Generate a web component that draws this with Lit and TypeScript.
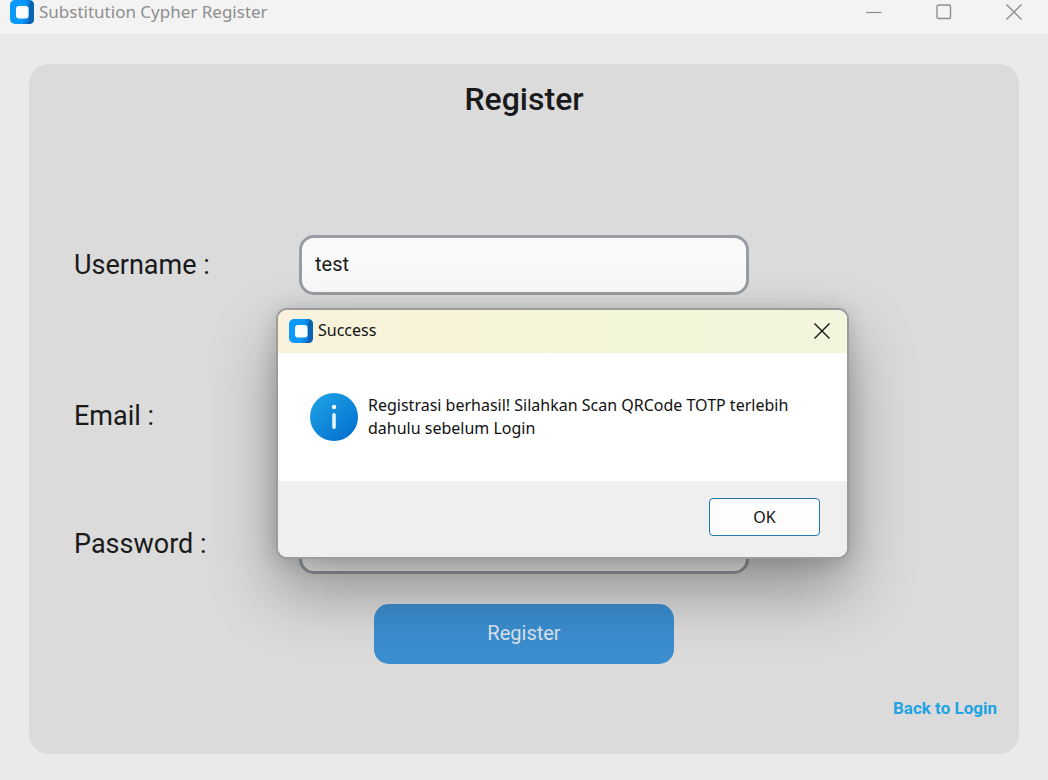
import { LitElement, html, css, svg } from "lit";
import { customElement, property } from "lit/decorators.js";

@customElement("app-logo")
class AppLogo extends LitElement {
  static styles = css`
    :host { display: block; width: 24px; height: 24px; flex: none; }
    .logo { display: block; }
  `;
  render() {
    return html`<svg class="logo" width="24" height="24" viewBox="0 0 24 24" aria-hidden="true">
      <rect width="24" height="24" rx="5" fill="#0a98fb" />
      <path d="M18 4.500 20.500 0.300Q24 1.500 24 5V19Q24 24 19 24H16L18.500 19.500 19 17V7Z" fill="#0a62b0" />
      <path d="M16 0H19L20.500 0.700 19 4.500 17 6ZM14 18 18 17.500 19.500 19.500 16.500 24H13Z" fill="#0a85e2" />
      <rect x="6" y="6" width="12.500" height="12.500" rx="3" fill="#fbfdff" />
    </svg>`;
  }
}

@customElement("window-glyph")
class WindowGlyph extends LitElement {
  @property() kind = "close";
  static styles = css`
    :host { display: block; }
    .glyph { display: block; fill: none; stroke: currentColor; }
  `;
  render() {
    const shapes: Record<string, unknown> = {
      minimize: svg`<path d="M0 8.500H15.500" stroke-width="1.200" />`,
      maximize: svg`<rect x="1" y="1" width="13.500" height="13.500" rx="1.500" stroke-width="1.400" />`,
      close: svg`<path d="M0.500 0.500 15.500 15.500M15.500 0.500 0.500 15.500" stroke-width="1.400" />`,
    };
    return html`<svg class="glyph" width="16" height="16" viewBox="0 0 16 16" aria-hidden="true">${shapes[this.kind]}</svg>`;
  }
}

@customElement("app-root")
class AppRoot extends LitElement {
  static styles = css`
    :host {
      display: flex;
      flex-direction: column;
      position: relative;
      min-height: 100vh;
      box-sizing: border-box;
      overflow: hidden;
      background: #eaeaea;
      color: #1a1a1a;
      font-family: Roboto, sans-serif;
    }
    button { font: inherit; color: inherit; border: 0; padding: 0; background: none; }
    .titlebar {
      display: flex;
      align-items: center;
      height: 34px;
      padding: 0 26px 11px 10px;
      box-sizing: border-box;
      gap: 5px;
      background: #f3f3f3;
      color: #8e8e8e;
      font: 17px/24px "Noto Sans", sans-serif;
    }
    .titlebar .caption { flex: 1; }
    .controls { display: flex; gap: 54px; }
    .page { flex: 1; display: flex; padding: 30px 29px 26px; }
    .card {
      flex: 1;
      display: flex;
      flex-direction: column;
      padding: 15px 22px 34px 45px;
      border-radius: 20px;
      background: #dbdbdb;
    }
    .heading { margin: 0 0 116px -23px; text-align: center; font-size: 32px; line-height: 40px; font-weight: 500; }
    .form { display: flex; flex-direction: column; }
    .row { display: grid; grid-template-columns: 225px minmax(0, 450px); align-items: center; margin-bottom: 68px; }
    .row.first { margin-bottom: 91px; }
    .row.last { margin-bottom: 30px; }
    .label { font-size: 27px; line-height: 32px; }
    .field {
      width: 100%;
      height: 60px;
      box-sizing: border-box;
      padding: 0 13px 2px;
      border: 3px solid #979da2;
      border-radius: 15px;
      background: #f9f9fa;
      color: #1a1a1a;
      font: 20px/24px Roboto, sans-serif;
      outline: none;
    }
    .submit {
      width: 300px;
      height: 60px;
      margin-left: -23px;
      padding-bottom: 2px;
      align-self: center;
      border-radius: 15px;
      background: #3b8ed0;
      color: #dce4ee;
      font-size: 20px;
    }
    .back {
      align-self: flex-end;
      margin-top: auto;
      color: #1fa3e4;
      font-size: 17px;
      line-height: 24px;
      font-weight: 700;
      text-decoration: none;
    }
    .dialog {
      position: absolute;
      left: 276px;
      top: 308px;
      width: 573px;
      margin: 0;
      padding: 0;
      box-sizing: border-box;
      border: 2px solid #9c9c9c;
      border-radius: 11px;
      overflow: hidden;
      background: #fff;
      color: #111;
      font: 16px/23px "Noto Sans", sans-serif;
      box-shadow: 0 32px 64px rgba(0, 0, 0, 0.34), 0 2px 21px rgba(0, 0, 0, 0.16);
    }
    .dialog-title {
      display: flex;
      align-items: center;
      gap: 5px;
      height: 43px;
      padding: 0 17px 2px 11px;
      box-sizing: border-box;
      background: linear-gradient(90deg, #f9f1dc, #f7f4d9 30%, #f4f6d9 60%, #f3f5dc);
    }
    .dialog-title .caption { flex: 1; }
    .message { display: flex; gap: 10px; padding: 40px 32px; }
    .info { flex: none; display: block; }
    .text { margin: 0; width: 440px; padding-top: 1px; }
    .actions { display: flex; justify-content: flex-end; padding: 17px 27px 21px; background: #efefef; }
    .ok {
      width: 111px;
      height: 38px;
      border: 1px solid #1f78b0;
      border-radius: 4px;
      background: #fdfdfd;
    }
  `;

  private row(id: string, label: string, value: string, type: string, extra = "") {
    return html`<div class="row ${extra}">
      <label class="label" for=${id}>${label}</label>
      <input class="field" id=${id} type=${type} .value=${value} />
    </div>`;
  }

  render() {
    return html`
      <header class="titlebar">
        <app-logo></app-logo>
        <span class="caption">Substitution Cypher Register</span>
        <div class="controls">
          <button aria-label="Minimize"><window-glyph kind="minimize"></window-glyph></button>
          <button aria-label="Maximize"><window-glyph kind="maximize"></window-glyph></button>
          <button aria-label="Close"><window-glyph kind="close"></window-glyph></button>
        </div>
      </header>
      <main class="page">
        <section class="card">
          <h1 class="heading">Register</h1>
          <form class="form">
            ${this.row("username", "Username :", "test", "text", "first")}
            ${this.row("email", "Email :", "", "email")}
            ${this.row("password", "Password :", "", "password", "last")}
            <button class="submit" type="button">Register</button>
          </form>
          <a class="back" href="#login">Back to Login</a>
        </section>
      </main>
      <dialog class="dialog" open aria-labelledby="dialog-title">
        <header class="dialog-title">
          <app-logo></app-logo>
          <span class="caption" id="dialog-title">Success</span>
          <button aria-label="Close dialog"><window-glyph kind="close"></window-glyph></button>
        </header>
        <div class="message">
          <svg class="info" width="48" height="48" viewBox="0 0 48 48" aria-hidden="true">
            <defs>
              <linearGradient id="blue" x1="0.150" y1="0.150" x2="0.800" y2="0.900">
                <stop offset="0" stop-color="#1b9de2" />
                <stop offset="1" stop-color="#0674d2" />
              </linearGradient>
            </defs>
            <circle cx="24" cy="24" r="24" fill="url(#blue)" />
            <circle cx="24" cy="14" r="2.200" fill="#fff" />
            <rect x="22.200" y="20" width="3.600" height="16" rx="1.800" fill="#e4f5fd" />
          </svg>
          <p class="text">Registrasi berhasil! Silahkan Scan QRCode TOTP terlebih dahulu sebelum Login</p>
        </div>
        <footer class="actions"><button class="ok">OK</button></footer>
      </dialog>
    `;
  }
}
